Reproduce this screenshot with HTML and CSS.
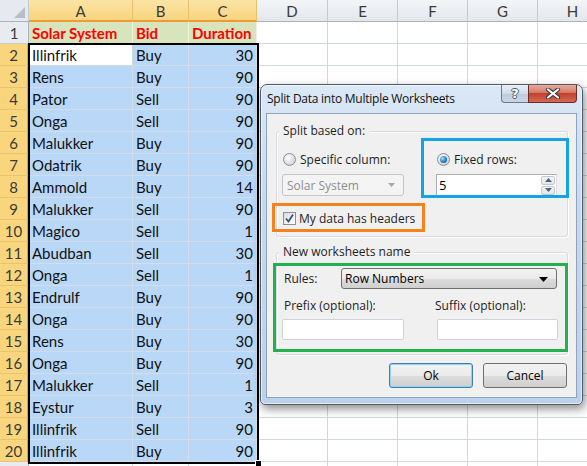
FILE: index.html
```html
<!DOCTYPE html>
<html>
<head>
<meta charset="utf-8">
<title>Split Data into Multiple Worksheets</title>
<link rel="stylesheet" href="styles.css">
</head>
<body>
<div class="screen">

<div class="sheet">
<div class="row"><div class="corner"></div><div class="hd on">A</div><div class="hd on">B</div><div class="hd on">C</div><div class="hd">D</div><div class="hd">E</div><div class="hd">F</div><div class="hd">G</div><div class="hd">H</div></div>
<div class="row"><div class="rh">1</div><div class="th">Solar System</div><div class="th">Bid</div><div class="th">Duration</div><div></div><div></div><div></div><div></div><div></div></div>
<div class="row"><div class="rh on">2</div><div class="act">Illinfrik</div><div class="s">Buy</div><div class="s n">30</div><div></div><div></div><div></div><div></div><div></div></div>
<div class="row"><div class="rh on">3</div><div class="s">Rens</div><div class="s">Buy</div><div class="s n">90</div><div></div><div></div><div></div><div></div><div></div></div>
<div class="row"><div class="rh on">4</div><div class="s">Pator</div><div class="s">Sell</div><div class="s n">90</div><div></div><div></div><div></div><div></div><div></div></div>
<div class="row"><div class="rh on">5</div><div class="s">Onga</div><div class="s">Sell</div><div class="s n">90</div><div></div><div></div><div></div><div></div><div></div></div>
<div class="row"><div class="rh on">6</div><div class="s">Malukker</div><div class="s">Buy</div><div class="s n">90</div><div></div><div></div><div></div><div></div><div></div></div>
<div class="row"><div class="rh on">7</div><div class="s">Odatrik</div><div class="s">Buy</div><div class="s n">90</div><div></div><div></div><div></div><div></div><div></div></div>
<div class="row"><div class="rh on">8</div><div class="s">Ammold</div><div class="s">Buy</div><div class="s n">14</div><div></div><div></div><div></div><div></div><div></div></div>
<div class="row"><div class="rh on">9</div><div class="s">Malukker</div><div class="s">Sell</div><div class="s n">90</div><div></div><div></div><div></div><div></div><div></div></div>
<div class="row"><div class="rh on">10</div><div class="s">Magico</div><div class="s">Sell</div><div class="s n">1</div><div></div><div></div><div></div><div></div><div></div></div>
<div class="row"><div class="rh on">11</div><div class="s">Abudban</div><div class="s">Sell</div><div class="s n">30</div><div></div><div></div><div></div><div></div><div></div></div>
<div class="row"><div class="rh on">12</div><div class="s">Onga</div><div class="s">Sell</div><div class="s n">1</div><div></div><div></div><div></div><div></div><div></div></div>
<div class="row"><div class="rh on">13</div><div class="s">Endrulf</div><div class="s">Buy</div><div class="s n">90</div><div></div><div></div><div></div><div></div><div></div></div>
<div class="row"><div class="rh on">14</div><div class="s">Onga</div><div class="s">Buy</div><div class="s n">90</div><div></div><div></div><div></div><div></div><div></div></div>
<div class="row"><div class="rh on">15</div><div class="s">Rens</div><div class="s">Buy</div><div class="s n">30</div><div></div><div></div><div></div><div></div><div></div></div>
<div class="row"><div class="rh on">16</div><div class="s">Onga</div><div class="s">Buy</div><div class="s n">90</div><div></div><div></div><div></div><div></div><div></div></div>
<div class="row"><div class="rh on">17</div><div class="s">Malukker</div><div class="s">Sell</div><div class="s n">1</div><div></div><div></div><div></div><div></div><div></div></div>
<div class="row"><div class="rh on">18</div><div class="s">Eystur</div><div class="s">Buy</div><div class="s n">3</div><div></div><div></div><div></div><div></div><div></div></div>
<div class="row"><div class="rh on">19</div><div class="s">Illinfrik</div><div class="s">Sell</div><div class="s n">90</div><div></div><div></div><div></div><div></div><div></div></div>
<div class="row"><div class="rh on">20</div><div class="s">Illinfrik</div><div class="s">Buy</div><div class="s n">90</div><div></div><div></div><div></div><div></div><div></div></div>
<div class="row"><div class="rh"></div><div></div><div></div><div></div><div></div><div></div><div></div><div></div><div></div></div>
</div>

<div class="selection"><span class="handle"></span></div>

<div class="dialog">
  <div class="titlebar">
    <span class="title">Split Data into Multiple Worksheets</span>
    <div class="caption">
      <span class="cap-help">?</span>
      <span class="cap-close"><svg width="16" height="11" viewBox="0 0 16 11"><path d="M3 1.5 L13 9.5 M13 1.5 L3 9.5" stroke="#3b3b3b" stroke-width="4.2" stroke-linecap="round"/><path d="M3 1.5 L13 9.5 M13 1.5 L3 9.5" stroke="#fff" stroke-width="2.2" stroke-linecap="round"/></svg></span>
    </div>
  </div>

  <div class="panel">
    <div class="group g1">
      <div class="legend">Split based on:</div>
      <div class="split">
        <label class="opt"><span class="radio"></span>Specific column:</label>
        <label class="opt opt2"><span class="radio on"></span>Fixed rows:</label>
        <div class="combo off">Solar System<svg class="arrow" width="7" height="4" viewBox="0 0 7 4"><path d="M0 0 H7 L3.5 4 Z" fill="#a8a8a8"/></svg></div>
        <div class="spin"><span>5</span>
          <div class="spin-btns">
            <i><svg width="7" height="4" viewBox="0 0 7 4"><path d="M0 4 H7 L3.5 0 Z" fill="#4d6185"/></svg></i>
            <i><svg width="7" height="4" viewBox="0 0 7 4"><path d="M0 0 H7 L3.5 4 Z" fill="#4d6185"/></svg></i>
          </div>
        </div>
      </div>
      <label class="check"><span class="box"><svg width="11" height="11" viewBox="0 0 11 11"><path d="M2 5.5 L4.5 8.5 L9 1.5" fill="none" stroke="#3a4d8f" stroke-width="1.8"/></svg></span>My data has headers</label>
    </div>

    <div class="group g2">
      <div class="legend">New worksheets name</div>
      <div class="rules">
        <span class="rules-label">Rules:</span>
        <div class="combo select">Row Numbers<svg class="arrow" width="9" height="5" viewBox="0 0 9 5"><path d="M0 0 H9 L4.5 5 Z" fill="#000"/></svg></div>
      </div>
      <div class="names">
        <span class="lbl-prefix">Prefix (optional):</span>
        <span class="lbl-suffix">Suffix (optional):</span>
        <div class="text in-prefix"></div>
        <div class="text in-suffix"></div>
      </div>
    </div>

    <div class="actions">
      <button class="btn default">Ok</button>
      <button class="btn">Cancel</button>
    </div>
  </div>

  <div class="mark mark-blue"></div>
  <div class="mark mark-orange"></div>
  <div class="mark mark-green"></div>
</div>

</div>
</body>
</html>
```

FILE: styles.css
```css
body {
 margin:0;
 background:#fff;
}

.screen {
 position:relative;
 width:587px;
 height:466px;
 overflow:hidden;
}

/* spreadsheet */
.sheet {
 display:grid;
 grid-template-columns:29px 104px 56px 68px 71px 70px 70px 70px 70px;
 grid-auto-rows:22px;
 font-family:Lato,"Liberation Sans",sans-serif;
 font-size:15px;
 color:#111;
}
.row { display:contents; }
.row > div {
 box-sizing:border-box;
 border-right:1px solid #d0d7e5;
 border-bottom:1px solid #d0d7e5;
 padding:0 3px;
 line-height:23px;
 white-space:nowrap;
 overflow:hidden;
}

.row > .corner {
 position:relative;
 background:#e6e9ee;
 border-right:1px solid #c5cad1;
 border-bottom:1px solid #aab2bc;
}
.corner:after {
 content:"";
 position:absolute;
 right:3px;
 bottom:3px;
 border-style:solid;
 border-width:0 0 11px 11px;
 border-color:transparent transparent #b7bec7 transparent;
}

.row > .hd {
 background:linear-gradient(#f3f5f7,#e3e7ec);
 border-right:1px solid #c5cad1;
 border-bottom:1px solid #aab2bc;
 text-align:center;
 color:#3a3a3a;
 line-height:22px;
}
.row > .hd.on {
 background:linear-gradient(#fbe4a6,#f8d57e);
 border-right-color:#e8c06a;
 border-bottom:2px solid #f29a3a;
}

.row > .rh {
 background:#e8ebef;
 border-right:1px solid #aab2bc;
 border-bottom:1px solid #c5cad1;
 text-align:center;
 padding:0;
 color:#3a3a3a;
}
.row > .rh.on {
 background:#f9d67e;
 border-right:2px solid #f29a3a;
 border-bottom-color:#e9c46e;
}

.row > .th {
 background:#d8e4bc;
 border-color:#eef3e2;
 color:#f00;
 font-weight:bold;
}
.row > .s {
 background:#b9d7f7;
 border-color:#d5dde8;
}
.row > .act { background:#fff; }
.row > .n { text-align:right; }

.selection {
 position:absolute;
 left:28px;
 top:43px;
 width:231px;
 height:421px;
 box-sizing:border-box;
 border:2px solid #000;
}
.handle {
 position:absolute;
 right:-5px;
 bottom:-5px;
 width:5px;
 height:5px;
 background:#000;
 border:1px solid #fff;
}

/* dialog */
.dialog {
 position:absolute;
 left:260px;
 top:84px;
 width:323px;
 height:321px;
 box-sizing:border-box;
 border:1px solid #4d5b6c;
 border-radius:7px 7px 5px 5px;
 background:linear-gradient(#dbe8f6,#c4d8ee 40%,#bcd2ea);
 box-shadow:2px 4px 10px rgba(0,0,0,.45), inset 0 0 0 1px rgba(255,255,255,.6);
 font-family:"Open Sans","Liberation Sans",sans-serif;
 font-size:12px;
 color:#000;
}

.titlebar {
 display:flex;
 height:28px;
 padding-left:6px;
}
.title {
 margin-top:6px;
 line-height:16px;
 letter-spacing:-.25px;
 color:#111;
}
.caption {
 display:flex;
 margin-left:auto;
 margin-right:5px;
 height:18px;
}
.cap-help {
 width:27px;
 box-sizing:border-box;
 border:1px solid #6b7a8f;
 border-top:0;
 border-right:0;
 border-radius:0 0 0 4px;
 background:linear-gradient(#e9eff7,#d1dcea 50%,#bccbdd 51%,#c9d6e6);
 text-align:center;
 font-family:"DejaVu Sans",sans-serif;
 font-weight:bold;
 font-size:13px;
 line-height:17px;
 color:#fff;
 text-shadow:1px 0 0 #4a5668,-1px 0 0 #4a5668,0 1px 0 #4a5668,0 -1px 0 #4a5668;
}
.cap-close {
 width:49px;
 box-sizing:border-box;
 border:1px solid #6a2c25;
 border-top:0;
 border-radius:0 0 4px 0;
 background:linear-gradient(#e9a99a,#d57a65 45%,#c2402c 50%,#d36b52);
 display:flex;
 align-items:center;
 justify-content:center;
}

.panel {
 margin:0 5px;
 height:285px;
 box-sizing:border-box;
 border:1px solid #8ea3bd;
 background:#f0f0f0;
 padding:17px 8px 0 9px;
}

.group {
 box-sizing:border-box;
 border:1px solid #d5dbe1;
 border-radius:3px;
 box-shadow:inset 1px 1px 0 #fff, 1px 1px 0 #fff;
 padding:0 6px;
}
.g1 { height:106px; }
.g2 { height:103px; margin-top:15px; }

.legend {
 display:table;
 margin:-9px 0 0 -4px;
 padding:0 4px;
 line-height:16px;
 background:#f0f0f0;
 color:#1e1e1e;
}

.split {
 display:grid;
 grid-template-columns:153px 121px;
 grid-template-rows:20px 22px;
 row-gap:5px;
 margin-top:10px;
}
.opt {
 display:flex;
 align-items:center;
 color:#1e1e1e;
}
.opt2 { margin-left:1px; }

.radio {
 width:13px;
 height:13px;
 box-sizing:border-box;
 border:1px solid #8c8f94;
 border-radius:50%;
 background:radial-gradient(circle at 40% 35%,#fff,#dcdcdc 60%,#c9c9c9);
 margin-right:4px;
 position:relative;
}
.radio.on:after {
 content:"";
 position:absolute;
 left:2px;
 top:2px;
 width:7px;
 height:7px;
 border-radius:50%;
 background:radial-gradient(circle at 35% 35%,#9fe0ff,#2a7fc8 55%,#0d3f80);
}

.combo {
 display:flex;
 align-items:center;
 box-sizing:border-box;
 padding-left:4px;
 position:relative;
 border-radius:3px;
}
.combo .arrow {
 position:absolute;
 right:8px;
 top:50%;
 margin-top:-2px;
}
.combo.off {
 margin-left:-1px;
 width:122px;
 border:1px solid #c4c4c4;
 background:#f4f4f4;
 color:#8e8e8e;
}

.spin {
 display:flex;
 align-items:center;
 box-sizing:border-box;
 width:121px;
 border:1px solid #abadb3;
 border-right-color:#dbdfe6;
 border-bottom-color:#e3e9ef;
 background:#fff;
 padding-left:2px;
 font-size:13px;
}
.spin-btns {
 margin-left:auto;
 margin-right:1px;
 display:flex;
 flex-direction:column;
 gap:1px;
}
.spin-btns i {
 display:flex;
 align-items:center;
 justify-content:center;
 width:14px;
 height:9px;
 box-sizing:border-box;
 border:1px solid #c2c7ce;
 border-radius:2px;
 background:linear-gradient(#f7f7f7,#e3e5e8);
}

.check {
 display:flex;
 align-items:center;
 height:18px;
 margin-top:13px;
 color:#1e1e1e;
}
.box {
 width:13px;
 height:13px;
 box-sizing:border-box;
 border:1px solid #8c8f94;
 background:linear-gradient(135deg,#dcdcdc,#fff);
 margin-right:3px;
 display:flex;
 align-items:center;
 justify-content:center;
}

.rules {
 display:flex;
 align-items:center;
 height:21px;
 margin-top:8px;
}
.rules-label {
 width:57px;
 margin-left:1px;
 color:#1e1e1e;
}
.combo.select {
 width:216px;
 height:21px;
 padding-left:3px;
 border:1px solid #707070;
 background:linear-gradient(#f2f2f2,#ebebeb 50%,#dddddd 51%,#cfcfcf);
 color:#000;
}

.names {
 display:grid;
 grid-template-columns:153px 122px;
 grid-template-rows:16px 21px;
 row-gap:5px;
 margin-top:9px;
 line-height:16px;
 color:#1e1e1e;
}
.lbl-prefix { margin-left:1px; }
.lbl-suffix { margin-left:-1px; }
.text {
 box-sizing:border-box;
 border:1px solid #cfd3d9;
 border-radius:2px;
 background:#fff;
}
.in-prefix { margin-left:-1px; width:122px; }
.in-suffix { margin-left:1px; width:121px; }

.actions {
 display:flex;
 justify-content:flex-end;
 gap:10px;
 margin-top:8px;
 padding-right:1px;
}
.btn {
 width:84px;
 height:25px;
 box-sizing:border-box;
 border:1px solid #707070;
 border-radius:3px;
 background:linear-gradient(#f2f2f2,#ebebeb 50%,#dddddd 51%,#cfcfcf);
 font-family:"Open Sans","Liberation Sans",sans-serif;
 font-size:12px;
 color:#000;
 padding:0;
}
.btn.default {
 border-color:#3c7fb1;
 box-shadow:inset 0 0 0 1px #8fd4f5;
}

/* annotation frames */
.mark {
 position:absolute;
 box-sizing:border-box;
 border:3px solid;
}
.mark-blue {
 left:160px;
 top:53px;
 width:148px;
 height:60px;
 border-color:#13a2e3;
}
.mark-orange {
 left:11px;
 top:118px;
 width:153px;
 height:29px;
 border-color:#f5821f;
}
.mark-green {
 left:12px;
 top:178px;
 width:295px;
 height:89px;
 border-color:#22b14c;
}
```
